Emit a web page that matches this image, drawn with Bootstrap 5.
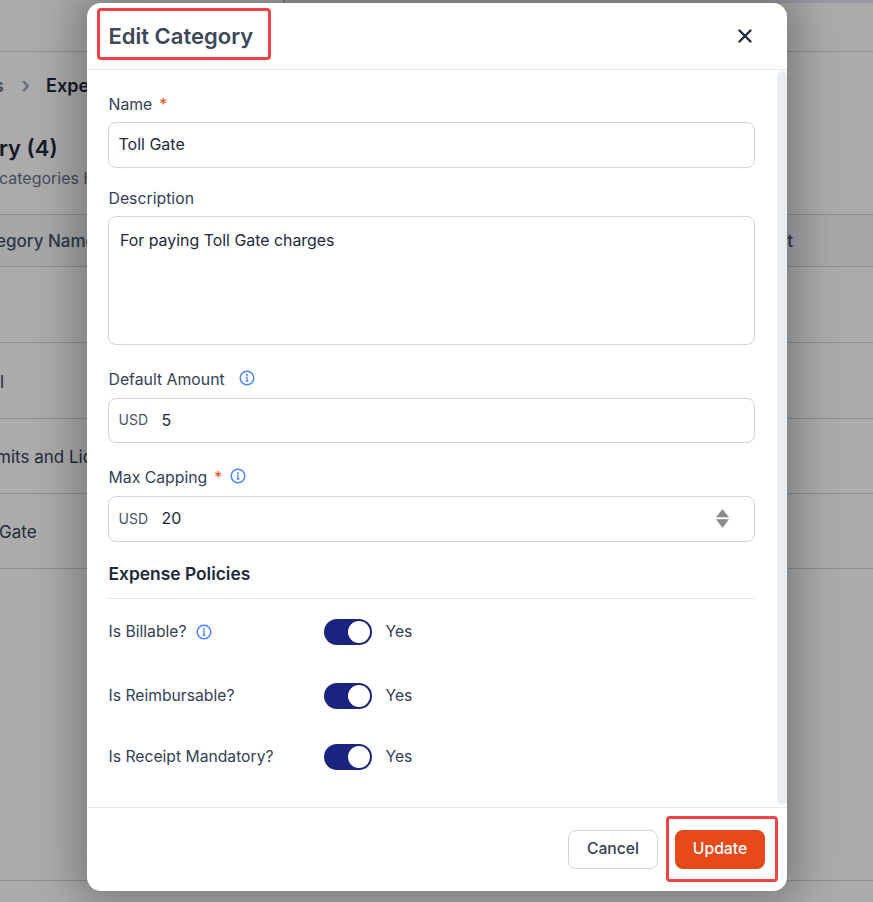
<!DOCTYPE html>
<html lang="en">
<head>
    <meta charset="UTF-8">
    <meta name="viewport" content="width=device-width, initial-scale=1.0">
    <title>Edit Category</title>
    <link href="https://cdn.jsdelivr.net/npm/bootstrap@5.3.0/dist/css/bootstrap.min.css" rel="stylesheet">
    <style>
        html, body {
            height: 100%;
            overflow: hidden;
        }
        body {
            font-family: Inter, "Liberation Sans", sans-serif;
            background: #fff;
            color: #1e293b;
        }
        /* page behind the dialog */
        .behind-page {
            height: 902px;
            overflow: hidden;
            position: relative;
            background: #fff;
        }
        .top-strip {
            height: 52px;
            border-bottom: 1px solid #cbd5e1;
        }
        .top-tab {
            height: 3px;
            margin-left: 283px;
            background: #e2e8f0;
            border-left: 1px solid #94a3b8;
        }
        .crumb-row {
            height: 66px;
            font-size: 18px;
            font-weight: 600;
            color: #1e293b;
            margin-left: -6px;
        }
        .crumb-row .crumb-gap {
            color: #94a3b8;
            margin: 0 16px 0 17px;
            font-size: 22px;
            line-height: 1;
        }
        .page-heading {
            margin-left: -1px;
            font-size: 22px;
            font-weight: 600;
            line-height: 30px;
            margin-top: 15px;
        }
        .page-sub {
            font-size: 16px;
            color: #64748b;
            line-height: 24px;
            margin-left: -1px;
            padding-top: 3px;
            height: 51px;
        }
        .table-head {
            height: 53px;
            background: #f8fafc;
            border-top: 1px solid #cbd5e1;
            border-bottom: 1px solid #cbd5e1;
            color: #475569;
            font-size: 17px;
            font-weight: 500;
            padding-top: 2px;
        }
        .table-line {
            border-bottom: 1px solid #cbd5e1;
            font-size: 17px;
            color: #334155;
            padding-top: 4px;
        }
        .shade {
            position: absolute;
            inset: 0;
            background: rgba(0, 0, 0, .33);
        }
        /* dialog */
        .edit-dialog {
            position: absolute;
            left: 87px;
            top: 3px;
            width: 700px;
            height: 888px;
            background: #fff;
            border: 0;
            border-radius: 14px;
            box-shadow: 0 0 40px 12px rgba(0, 0, 0, .28);
            overflow: hidden;
        }
        .edit-dialog .modal-header {
            height: 67px;
            padding: 0 21px 0 21.500px;
            border-bottom: 1px solid #e2e8f0;
            flex-shrink: 0;
        }
        .edit-title {
            font-size: 22px;
            font-weight: 600;
            color: #3c4858;
            margin: 0;
        }
        .red-mark {
            position: absolute;
            border: 3px solid #ef4444;
            border-radius: 4px;
            pointer-events: none;
        }
        .mark-title {
            left: 10px;
            top: 5px;
            width: 174px;
            height: 52px;
        }
        .mark-update {
            left: 579px;
            top: 8px;
            width: 112px;
            height: 66px;
        }
        .close-x {
            width: 16px;
            height: 16px;
            display: block;
            margin-right: 13px;
        }
        .dialog-body {
            flex: 1;
            min-height: 0;
            padding: 25px 32px 0 21px;
            position: relative;
        }
        .rail {
            position: absolute;
            top: 1px;
            right: 0;
            bottom: 2px;
            width: 10px;
            border-radius: 5px;
            background: #e8edf2;
        }
        .field-label {
            font-size: 15.8px;
            line-height: 20px;
            color: #334155;
            margin-bottom: 7px;
            padding-left: .5px;
            display: flex;
            align-items: center;
        }
        .field-label.money-label {
            margin-bottom: 8px;
        }
        .req {
            color: #ea4e1b;
            margin-left: 7px;
        }
        .tip {
            width: 16px;
            height: 16px;
            display: block;
        }
        .field-label .tip {
            margin-bottom: 4px;
        }
        .form-control.edit-input {
            height: 46px;
            border: 1px solid #cbd5e1;
            border-radius: 8px;
            font-size: 16px;
            color: #1e293b;
            padding: 0 9.500px 2px;
            margin-bottom: 21px;
        }
        .form-control.edit-area {
            height: 129px;
            border: 1px solid #cbd5e1;
            border-radius: 8px;
            font-size: 15.900px;
            color: #1e293b;
            padding: 12px 11px;
            margin-bottom: 25px;
            resize: none;
        }
        .money-box {
            height: 45px;
            border: 1px solid #cbd5e1;
            border-radius: 8px;
            padding: 0 25px 2px 9.500px;
            font-size: 16px;
            margin-bottom: 25px;
        }
        .money-box.tall-box {
            height: 46px;
            margin-bottom: 0;
        }
        .money-unit {
            font-size: 14px;
            color: #475569;
            width: 43px;
        }
        .policy-title {
            font-size: 17.4px;
            font-weight: 600;
            color: #1e293b;
            line-height: 24px;
            padding: 0 0 12px .5px;
            border-bottom: 1px solid #e2e8f0;
            margin-top: 20px;
        }
        .policy-row {
            font-size: 15.7px;
            color: #334155;
            padding-left: .5px;
        }
        .policy-name {
            width: 215.500px;
        }
        .switch-on {
            width: 48px;
            height: 26px;
            border-radius: 13px;
            background: #1a237e;
            position: relative;
            margin-right: 13.500px;
        }
        .switch-on::after {
            content: "";
            position: absolute;
            right: 2px;
            top: 2px;
            width: 22px;
            height: 22px;
            border-radius: 50%;
            background: #fff;
        }
        .edit-dialog .modal-footer {
            height: 84px;
            padding: 0 22px 0 0;
            border-top: 1px solid #e2e8f0;
            flex-shrink: 0;
            position: relative;
            gap: 17px;
        }
        .edit-dialog .modal-footer .btn {
            margin: 0;
            height: 39px;
            width: 90px;
            font-size: 15.7px;
            font-weight: 500;
            border-radius: 8px;
            padding: 0 0 2px;
        }
        .btn-quiet {
            background: #fff;
            border: 1px solid #cbd5e1;
            color: #334155;
        }
        .btn-update {
            background: #e64a19;
            border: 0;
            color: #fff;
        }
    </style>
</head>
<body>
    <div class="behind-page">
        <div class="top-strip"><div class="top-tab"></div></div>
        <div class="crumb-row d-flex align-items-center">
            <span class="text-secondary">s</span>
            <span class="crumb-gap">&#8250;</span>
            <span>Expense</span>
        </div>
        <div class="page-heading">ry (4)</div>
        <div class="page-sub">categories here</div>
        <div class="table-head d-flex align-items-center justify-content-between">
            <span style="margin-left:-4px">egory Name</span>
            <span style="margin-right:80px">t</span>
        </div>
        <div class="table-line" style="height:76px"></div>
        <div class="table-line d-flex align-items-center" style="height:76px">l</div>
        <div class="table-line d-flex align-items-center" style="height:75px"><span style="margin-left:-4px">mits and Licenses</span></div>
        <div class="table-line d-flex align-items-center" style="height:75px"><span style="margin-left:-1px">Gate</span></div>
        <div class="table-line" style="height:312px"></div>
        <div class="shade"></div>

        <div class="modal-content edit-dialog">
            <div class="modal-header">
                <h5 class="edit-title">Edit Category</h5>
                <div class="red-mark mark-title"></div>
                <svg class="close-x ms-auto" viewBox="0 0 16 16"><path d="M2.500 2.500l11 11M13.500 2.500l-11 11" stroke="#1e293b" stroke-width="2.4" stroke-linecap="round"/></svg>
            </div>
            <div class="dialog-body">
                <div class="rail"></div>
                <div class="field-label">Name <span class="req">*</span></div>
                <input class="form-control edit-input" value="Toll Gate">
                <div class="field-label">Description</div>
                <textarea class="form-control edit-area">For paying Toll Gate charges</textarea>
                <div class="field-label money-label">Default Amount
                    <svg class="tip" style="margin-left:14px" viewBox="0 0 16 16" fill="none"><circle cx="8" cy="8" r="6.800" stroke="#4a86f7" stroke-width="1.500"/><circle cx="8" cy="5" r="1" fill="#4a86f7"/><path d="M6.800 7.400H8v3.400M6.800 11h2.600" stroke="#4a86f7" stroke-width="1.300"/></svg>
                </div>
                <div class="money-box d-flex align-items-center">
                    <span class="money-unit">USD</span><span>5</span>
                </div>
                <div class="field-label money-label">Max Capping <span class="req">*</span>
                    <svg class="tip ms-2" viewBox="0 0 16 16" fill="none"><circle cx="8" cy="8" r="6.800" stroke="#4a86f7" stroke-width="1.500"/><circle cx="8" cy="5" r="1" fill="#4a86f7"/><path d="M6.800 7.400H8v3.400M6.800 11h2.600" stroke="#4a86f7" stroke-width="1.300"/></svg>
                </div>
                <div class="money-box tall-box d-flex align-items-center">
                    <span class="money-unit">USD</span><span>20</span>
                    <svg class="ms-auto" width="13" height="19" viewBox="0 0 13 19"><path d="M6.500.5l6 7.500H.5zM6.500 18.500L.5 10.500h12z" fill="#8c8c8c" stroke="#8c8c8c" stroke-linejoin="round" stroke-width=".6"/></svg>
                </div>
                <div class="policy-title">Expense Policies</div>
                <div class="policy-row d-flex align-items-center" style="margin-top:20px">
                    <div class="policy-name d-flex align-items-center">Is Billable?
                        <svg class="tip" style="margin-left:10px" viewBox="0 0 16 16" fill="none"><circle cx="8" cy="8" r="6.800" stroke="#4a86f7" stroke-width="1.500"/><circle cx="8" cy="5" r="1" fill="#4a86f7"/><path d="M6.800 7.400H8v3.400M6.800 11h2.600" stroke="#4a86f7" stroke-width="1.300"/></svg>
                    </div>
                    <div class="switch-on"></div><span>Yes</span>
                </div>
                <div class="policy-row d-flex align-items-center" style="margin-top:38px">
                    <div class="policy-name">Is Reimbursable?</div>
                    <div class="switch-on"></div><span>Yes</span>
                </div>
                <div class="policy-row d-flex align-items-center" style="margin-top:35px">
                    <div class="policy-name">Is Receipt Mandatory?</div>
                    <div class="switch-on"></div><span>Yes</span>
                </div>
            </div>
            <div class="modal-footer">
                <div class="red-mark mark-update"></div>
                <button class="btn btn-quiet">Cancel</button>
                <button class="btn btn-update">Update</button>
            </div>
        </div>
    </div>
    <script src="https://cdn.jsdelivr.net/npm/bootstrap@5.3.0/dist/js/bootstrap.bundle.min.js"></script>
</body>
</html>
